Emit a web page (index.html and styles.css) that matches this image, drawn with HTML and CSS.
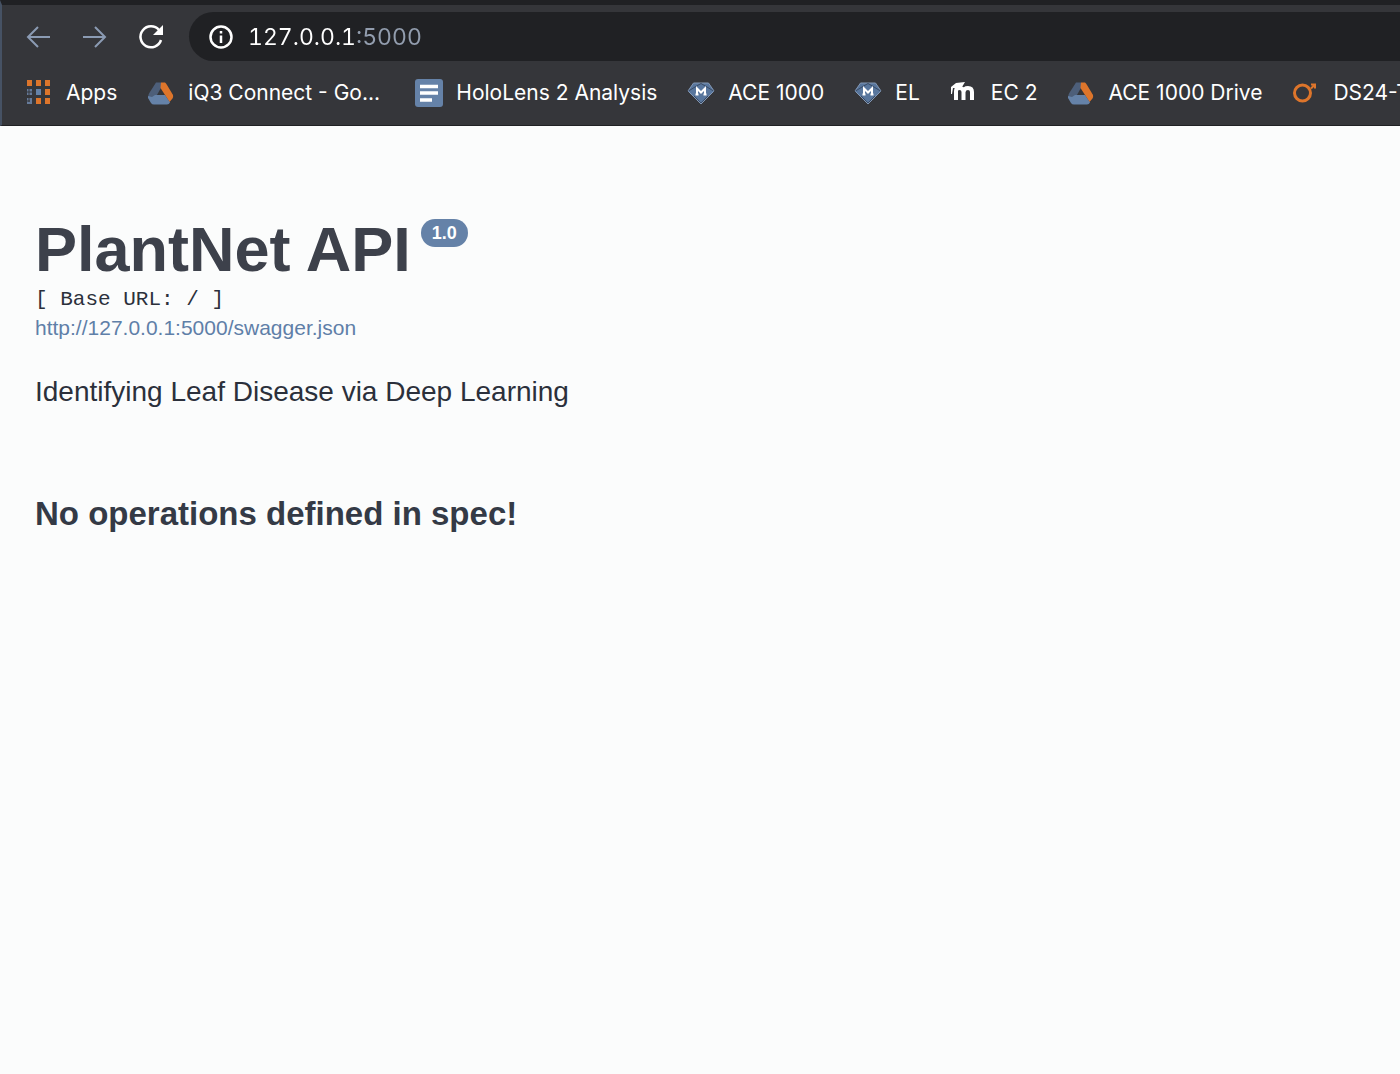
FILE: index.html
```html
<!DOCTYPE html>
<html lang="en">
<head>
<meta charset="utf-8">
<meta name="viewport" content="width=device-width, initial-scale=1">
<title>PlantNet API</title>
<link rel="stylesheet" href="styles.css">
</head>
<body>
<svg class="symbols" aria-hidden="true">
  <symbol id="drive" viewBox="0 0 28 28">
    <path d="M9 3.500 L14 3.500 L15 7 L6 23 L1.500 18 Q1 16 2 14.500 Z" fill="#4d5f7a"/>
    <path d="M14 3.500 L18 3.500 Q19 4 20 6 L26 16 Q26.500 18 25.500 19.500 L22.500 23 L13.500 9 Z" fill="#dd752b"/>
    <path d="M1 17 L5 18 L8 16 L18 16 L23 23.500 Q22 25.500 20 25.500 L7 25.500 Q5 25.500 4 24 L1 19 Z" fill="#6582a8"/>
  </symbol>
  <symbol id="gem" viewBox="0 0 28 28">
    <path d="M6.500 4 H21.500 L27 12 L14 25 L1 12 Z" fill="#58769d" stroke="#8398b5"/>
    <path d="M1.500 12 L8 8 L14 4.500 L20 8 L26.500 12 M7 17 L14 24 L21 17" fill="none" stroke="#394b64"/>
    <path d="M10 15.500 V9.500 L14 13.500 L18 9.500 V15.500 M8.500 15.500 H11.500 M16.500 15.500 H19.500" fill="none" stroke="#fff" stroke-width="2"/>
  </symbol>
</svg>
<header class="browser">
  <form class="toolbar">
    <button class="nav nav-dim" type="button" aria-label="Back">
      <svg viewBox="0 0 28 28"><path d="M25 14 H3 M13 4 L3 14 L13 24"/></svg>
    </button>
    <button class="nav nav-dim" type="button" aria-label="Forward">
      <svg viewBox="0 0 28 28"><path d="M2 14 H24 M14 4 L24 14 L14 24"/></svg>
    </button>
    <button class="nav" type="button" aria-label="Reload">
      <svg viewBox="0 0 28 28"><path d="M24 17 A10.500 10.500 0 1 1 22 7" stroke-width="2.500"/><path class="solid" d="M26 2 V12 H16 Z"/></svg>
    </button>
    <div class="omnibox">
      <button class="info" type="button" aria-label="View site information">
        <svg viewBox="0 0 28 28"><circle cx="14" cy="14" r="10.500" stroke-width="2.500"/><path d="M14 12.500 V20 M14 8 V10.500" stroke-width="2.500"/></svg>
      </button>
      <input class="address" type="text" aria-label="Address" value="127.0.0.1:5000">
    </div>
  </form>
  <nav class="bookmarks" aria-label="Bookmarks">
    <a class="bookmark" href="#"><svg viewBox="0 0 28 28"><g fill="#dd752b"><path d="M2 1h5v6h-5zM11 1h5v6h-5zM20 1h5v6h-5zM20 10h5v6h-5zM11 19h5v6h-5zM20 19h5v6h-5z"/></g><path d="M11 10h5v6h-5z" fill="#6582a8"/><path d="M2 10h5v6h-5zM2 19h5v6h-5z" fill="#667b9a"/><path d="M4 10v6M2 13h5M4 19v4M2 22h3" stroke="#35363a"/></svg><span>Apps</span></a>
    <a class="bookmark bookmark-wide" href="#"><svg><use href="#drive"/></svg><span>iQ3 Connect - Go...</span></a>
    <a class="bookmark" href="#"><svg viewBox="0 0 28 28"><rect y="0" width="28" height="28" rx="3" fill="#6582a8"/><path d="M5 7.500h18M5 14h18M5 21h12" stroke="#fff" stroke-width="3.500"/></svg><span>HoloLens 2 Analysis</span></a>
    <a class="bookmark" href="#"><svg><use href="#gem"/></svg><span>ACE 1000</span></a>
    <a class="bookmark" href="#"><svg><use href="#gem"/></svg><span>EL</span></a>
    <a class="bookmark" href="#"><svg viewBox="0 0 28 28"><path d="M6 21 V12 Q6 9 9.500 9 Q13.500 9 13.500 13 V21 M13.500 13 Q14 9 18 9 Q22 9 22 13 V21" fill="none" stroke="#fff" stroke-width="4"/><path d="M1 8 L6 4 L15 3 L12 8 L6 9 L3 9 L2 15 L1 15 Z" fill="#fff"/></svg><span>EC 2</span></a>
    <a class="bookmark" href="#"><svg><use href="#drive"/></svg><span>ACE 1000 Drive</span></a>
    <a class="bookmark" href="#"><svg viewBox="0 0 28 28"><circle cx="10.500" cy="14" r="8" fill="none" stroke="#dd752b" stroke-width="3"/><path d="M19 5.500h4v4M19 9.500l4-4" fill="none" stroke="#dd752b" stroke-width="2"/></svg><span>DS24-T</span></a>
  </nav>
</header>
<main class="page">
  <div class="title-row">
    <h1>PlantNet API</h1>
    <span class="version">1.0</span>
  </div>
  <pre class="base-url">[ Base URL: / ]</pre>
  <a class="spec-link" href="#">http://127.0.0.1:5000/swagger.json</a>
  <p class="description">Identifying Leaf Disease via Deep Learning</p>
  <h3 class="empty">No operations defined in spec!</h3>
</main>
</body>
</html>
```
FILE: styles.css
```css
* { box-sizing: border-box; }
body {
  margin: 0;
  min-height: 100vh;
  overflow-x: hidden;
  background: #fbfcfc;
  color: #2b303b;
  font-family: "Liberation Sans", Arial, sans-serif;
}
.symbols { position: absolute; width: 0; height: 0; }
.browser {
  overflow: hidden;
  padding-top: 7px;
  background: #35363a;
  border-top: 5px solid #202124;
  border-bottom: 1px solid #202124;
  border-left: 2px solid #465264;
  font-family: Inter, sans-serif;
}
.toolbar { display: flex; align-items: center; padding-left: 23px; }
button { padding: 0; border: 0; background: none; color: #fff; }
button svg { display: block; width: 28px; height: 28px; fill: none; stroke: currentColor; stroke-width: 2; }
button .solid { fill: currentColor; stroke: none; }
.nav { flex: none; margin-right: 28px; }
.nav-dim { color: #8b9bb3; }
.nav:nth-of-type(3) { margin-right: 24px; }
.omnibox {
  flex: 1;
  display: flex;
  align-items: center;
  gap: 13px;
  height: 49px;
  padding-left: 18px;
  border-radius: 25px 0 0 25px;
  background: #202124;
}
.address {
  flex: 1;
  min-width: 0;
  padding: 0;
  border: 0;
  outline: 0;
  font: 23px/32px Inter, sans-serif;
  font-variant-numeric: tabular-nums;
  color: transparent;
  background: linear-gradient(to right, #fff 106px, #929dae 106px);
  -webkit-background-clip: text;
  background-clip: text;
}
.bookmarks { display: flex; gap: 30px; height: 64px; padding-left: 23px; align-items: center; }
.bookmark {
  flex: none;
  display: flex;
  align-items: center;
  gap: 13px;
  color: #fff;
  font-size: 21px;
  line-height: 28px;
  text-decoration: none;
  white-space: nowrap;
}
.bookmark svg { flex: none; width: 28px; height: 28px; }
.bookmark-wide { width: 238px; }
.page { padding: 92px 35px; }
.title-row { display: flex; align-items: flex-start; gap: 10px; }
h1 { margin: 0; font-size: 63px; line-height: 62px; color: #3d414b; }
.version {
  margin-top: 1px;
  padding: 0 11px;
  border-radius: 14px;
  background: #6582a8;
  color: #fff;
  font-size: 18px;
  font-weight: bold;
  line-height: 28px;
}
.base-url { margin: 6px 0 0; font: 21px/28px "Liberation Mono", monospace; }
.spec-link { display: block; color: #5f7fa8; font-size: 21px; line-height: 28px; text-decoration: none; }
.description { margin: 32px 0 0; font-size: 28px; line-height: 36px; }
.empty { margin: 84px 0 0; font-size: 33px; line-height: 40px; color: #343a46; }
```
